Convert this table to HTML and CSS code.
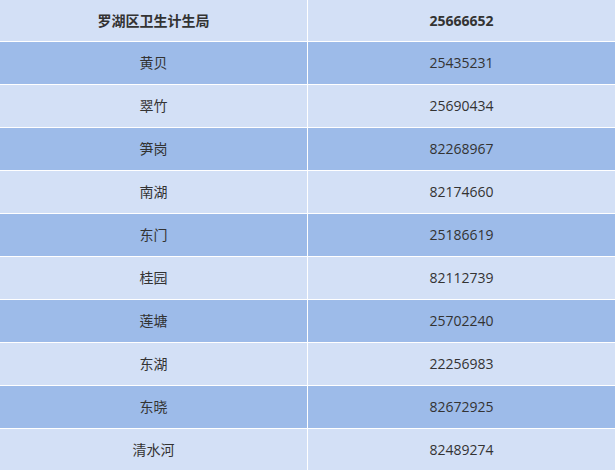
FILE: index.html
```html
<!DOCTYPE html>
<html>
<head>
<meta charset="utf-8">
<link rel="stylesheet" href="styles.css">
</head>
<body>
<div class="table">
  <div class="cell head">罗湖区卫生计生局</div><div class="cell head">25666652</div>
  <div class="cell dark">黄贝</div><div class="cell dark">25435231</div>
  <div class="cell">翠竹</div><div class="cell">25690434</div>
  <div class="cell dark">笋岗</div><div class="cell dark">82268967</div>
  <div class="cell">南湖</div><div class="cell">82174660</div>
  <div class="cell dark">东门</div><div class="cell dark">25186619</div>
  <div class="cell">桂园</div><div class="cell">82112739</div>
  <div class="cell dark">莲塘</div><div class="cell dark">25702240</div>
  <div class="cell">东湖</div><div class="cell">22256983</div>
  <div class="cell dark">东晓</div><div class="cell dark">82672925</div>
  <div class="cell">清水河</div><div class="cell">82489274</div>
</div>
</body>
</html>
```
FILE: styles.css
```css
html, body {
  margin: 0;
  padding: 0;
  background: #ffffff;
  overflow: hidden;
}
.table {
  display: grid;
  grid-template-columns: 307px 307px;
  grid-template-rows: 41px;
  grid-auto-rows: 42px;
  gap: 1px;
  width: 615px;
  background: #ffffff;
  font-family: "Open Sans", "Noto Sans CJK SC", sans-serif;
  font-size: 14px;
  line-height: 20px;
  color: #333333;
}
.cell {
  background: #d3e0f6;
  display: flex;
  align-items: center;
  justify-content: center;
}
.cell.dark {
  background: #9dbbe9;
}
.cell.head {
  font-weight: bold;
}
```
